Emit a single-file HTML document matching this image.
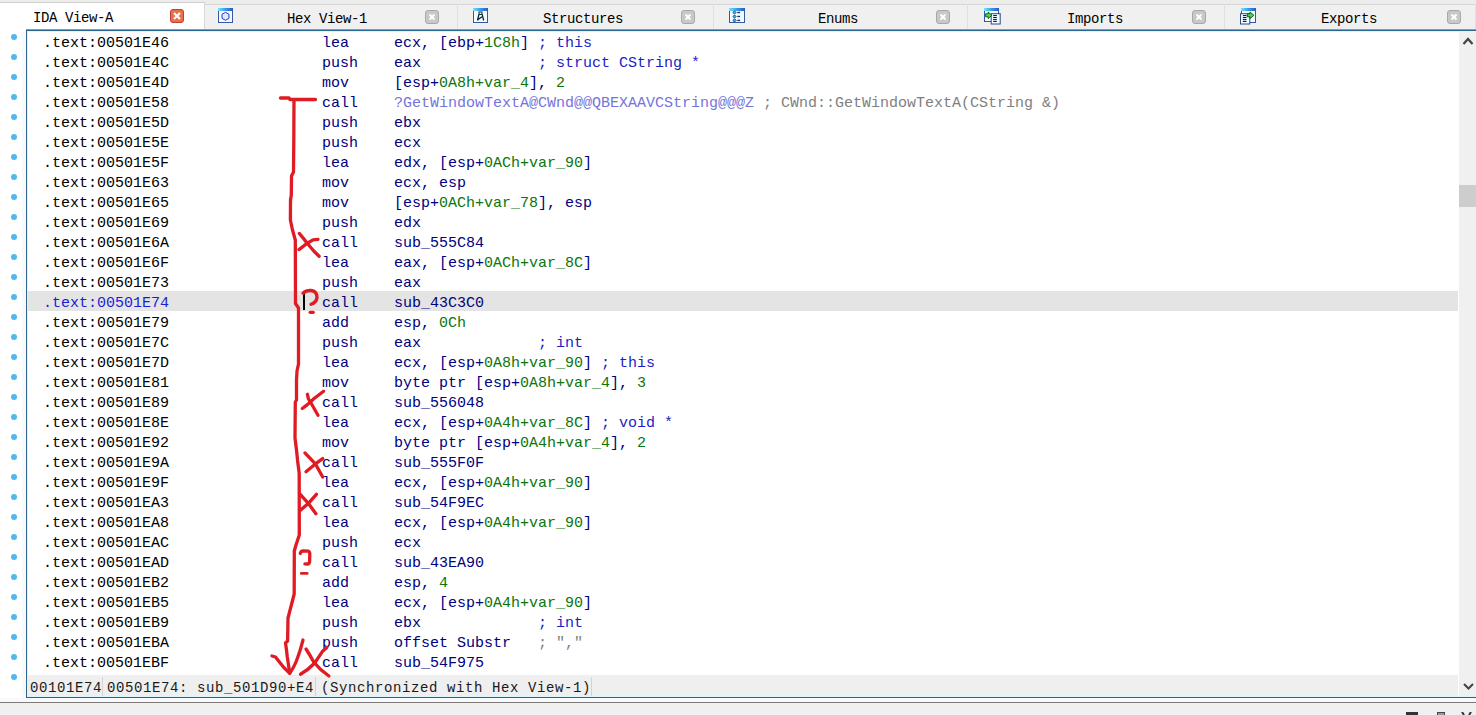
<!DOCTYPE html>
<html><head><meta charset="utf-8"><style>
*{margin:0;padding:0;box-sizing:border-box}
html,body{width:1476px;height:715px;overflow:hidden;background:#fff;position:relative;font-family:"Liberation Mono",monospace}
#strip{position:absolute;left:0;top:0;width:1476px;height:30px;background:#ececec}
.tab{position:absolute;top:4px;height:26px;background:#f0f0f0;border-top:1px solid #d6d6d6;border-right:1px solid #e0e0e0}
.tab.act{top:2px;height:28px;background:#fff;border-top:1px solid #d0d0d0;border-right:1px solid #d8d8d8}
.tl{position:absolute;top:11px;font-size:14px;line-height:16px;letter-spacing:-0.4px;color:#000;white-space:pre}
.cb{position:absolute;top:10px;width:14px;height:14px;border-radius:3px;background:#c8c8c8;border:1px solid #a8a8a8}
.cb svg{position:absolute;left:-1px;top:-1px}
.cb.act{top:9px;background:#e8704a;border:1px solid #c0402a}
.ic{position:absolute;top:8px}
#tabline{position:absolute;left:26px;top:29px;width:1450px;height:3px;background:linear-gradient(#8a9cae 0,#8a9cae 1px,#2a6690 1px,#2a6690 2px,#d2fbff 2px)}
#panel{position:absolute;left:26px;top:30px;width:1450px;height:668px;border-left:1px solid #2a6690;border-bottom:1px solid #2a6690}
#pcy{position:absolute;left:27px;top:32px;width:1px;height:664px;background:#d6f6ff}
#bcy{position:absolute;left:27px;top:696px;width:1449px;height:1px;background:#d6f6ff}
.dot{position:absolute;left:11px;width:6px;height:6px;border-radius:50%;background:#50b8ee}
.r{position:absolute;left:43px;height:20px;line-height:20px;font-size:15px;white-space:pre;padding-top:3px}
.r span{white-space:pre}
.a{color:#000}
.ah{color:#1c1cd4}
.m{position:absolute;left:279px;top:3px;color:#000080}
.o{position:absolute;left:351px;top:3px}
.n{color:#000080} .g{color:#0b760b} .c{color:#1c1cc8} .gr{color:#7f7f7f} .p{color:#7474dc}
#hl{position:absolute;left:28px;top:291px;width:1430px;height:20px;background:#e4e4e4}
#sb{position:absolute;left:1459px;top:31px;width:17px;height:666px;background:#f0f0f0}
#thumb{position:absolute;left:1459px;top:185px;width:17px;height:22px;background:#cdcdcd}
#status{position:absolute;left:27px;top:675px;width:1431px;height:22px;background:#efefef}
.st{position:absolute;top:675px;height:22px;line-height:22px;font-size:14px;letter-spacing:0.6px;color:#1a1a1a;white-space:pre;padding-top:2px}
.sep{position:absolute;top:677px;width:1px;height:19px;background:#d4d4d4}
#bottom{position:absolute;left:0;top:698px;width:1476px;height:17px;background:#f0f0f0}
#bline{position:absolute;left:0;top:702px;width:1476px;height:1px;background:#7a7a7a}
#bwhite{position:absolute;left:0;top:698px;width:1476px;height:4px;background:#fbf8fb}
.ann{position:absolute;left:0;top:0}
#cursor{position:absolute;left:303px;top:294px;width:2px;height:16px;background:#000}
</style></head><body>
<div id="strip"></div>
<div class="tab act" style="left:0px;width:205px"></div>
<div class="tl" style="left:33px;top:10px">IDA View-A</div>
<div class="cb act" style="left:170px"><svg width="14" height="14" viewBox="0 0 14 14"><path d="M4,4 L10,10 M10,4 L4,10" stroke="#fff" stroke-width="2.2"/></svg></div>
<div class="tab" style="left:205px;width:253px"></div>
<div class="tl" style="left:287px;top:11px">Hex View-1</div>
<div class="cb" style="left:425px"><svg width="14" height="14" viewBox="0 0 14 14"><path d="M4.5,4.5 L9.5,9.5 M9.5,4.5 L4.5,9.5" stroke="#fff" stroke-width="2"/></svg></div>
<svg class="ic" style="left:218px" width="17" height="17" viewBox="0 0 17 17"><defs><linearGradient id="tbhex" x1="0" x2="1"><stop offset="0" stop-color="#6fe6ff"/><stop offset="0.5" stop-color="#3a9ae8"/><stop offset="1" stop-color="#2a58c8"/></linearGradient></defs><rect x="0.5" y="0.5" width="14" height="14" fill="#f2fdff" stroke="#3558a0"/><rect x="0" y="0" width="15" height="3" fill="url(#tbhex)"/><polygon points="7.5,4.3 11,6.3 11,10.3 7.5,12.3 4,10.3 4,6.3" fill="#dfe8ff" stroke="#3030c8" stroke-width="1"/></svg>
<div class="tab" style="left:458px;width:256px"></div>
<div class="tl" style="left:543px;top:11px">Structures</div>
<div class="cb" style="left:681px"><svg width="14" height="14" viewBox="0 0 14 14"><path d="M4.5,4.5 L9.5,9.5 M9.5,4.5 L4.5,9.5" stroke="#fff" stroke-width="2"/></svg></div>
<svg class="ic" style="left:473px" width="17" height="17" viewBox="0 0 17 17"><defs><linearGradient id="tbstruct" x1="0" x2="1"><stop offset="0" stop-color="#6fe6ff"/><stop offset="0.5" stop-color="#3a9ae8"/><stop offset="1" stop-color="#2a58c8"/></linearGradient></defs><rect x="0.5" y="0.5" width="14" height="14" fill="#f2fdff" stroke="#3558a0"/><rect x="0" y="0" width="15" height="3" fill="url(#tbstruct)"/><rect x="6" y="4" width="3" height="2.5" fill="#dff" stroke="#102838" stroke-width="1"/><path d="M5.9,6.4 L4.5,12.5 M9.2,6.4 L10.7,12.5 M4.8,11.6 L9,8.8" fill="none" stroke="#102838" stroke-width="1.3"/></svg>
<div class="tab" style="left:714px;width:254px"></div>
<div class="tl" style="left:818px;top:11px">Enums</div>
<div class="cb" style="left:936px"><svg width="14" height="14" viewBox="0 0 14 14"><path d="M4.5,4.5 L9.5,9.5 M9.5,4.5 L4.5,9.5" stroke="#fff" stroke-width="2"/></svg></div>
<svg class="ic" style="left:729px" width="17" height="17" viewBox="0 0 17 17"><defs><linearGradient id="tbenum" x1="0" x2="1"><stop offset="0" stop-color="#6fe6ff"/><stop offset="0.5" stop-color="#3a9ae8"/><stop offset="1" stop-color="#2a58c8"/></linearGradient></defs><rect x="0.5" y="0.5" width="15" height="14" fill="#f2fdff" stroke="#3558a0"/><rect x="0" y="0" width="16" height="3" fill="url(#tbenum)"/><path d="M3.9,4.5 l1.6,-1.6 l1.6,1.6 l-1.6,1.6z" fill="#48b4ee" stroke="#103a78" stroke-width="0.9"/><rect x="8.3" y="3.8" width="2.8" height="1.4" fill="#203868"/><path d="M3.9,8.5 l1.6,-1.6 l1.6,1.6 l-1.6,1.6z" fill="#48b4ee" stroke="#103a78" stroke-width="0.9"/><rect x="8.3" y="7.8" width="2.8" height="1.4" fill="#203868"/><path d="M3.9,12.4 l1.6,-1.6 l1.6,1.6 l-1.6,1.6z" fill="#48b4ee" stroke="#103a78" stroke-width="0.9"/><rect x="8.3" y="11.700000000000001" width="2.8" height="1.4" fill="#203868"/></svg>
<div class="tab" style="left:968px;width:257px"></div>
<div class="tl" style="left:1067px;top:11px">Imports</div>
<div class="cb" style="left:1192px"><svg width="14" height="14" viewBox="0 0 14 14"><path d="M4.5,4.5 L9.5,9.5 M9.5,4.5 L4.5,9.5" stroke="#fff" stroke-width="2"/></svg></div>
<svg class="ic" style="left:984px" width="17" height="17" viewBox="0 0 17 17"><defs><linearGradient id="tbimp" x1="0" x2="1"><stop offset="0" stop-color="#6fe6ff"/><stop offset="0.5" stop-color="#3a9ae8"/><stop offset="1" stop-color="#2a58c8"/></linearGradient></defs><rect x="0.5" y="0.5" width="14" height="13" fill="#f2fdff" stroke="#3558a0"/><rect x="0" y="0" width="15" height="3" fill="url(#tbimp)"/><rect x="7.2" y="5.7" width="9" height="10.3" fill="#f2fdff" stroke="#2e4a80"/><rect x="9.2" y="7" width="3.6" height="1.1" fill="#141478"/><rect x="9.2" y="9" width="3.6" height="1.1" fill="#141478"/><rect x="9.2" y="11" width="3.6" height="1.1" fill="#141478"/><rect x="9.2" y="12.9" width="3.6" height="1.1" fill="#141478"/><path d="M1.6,5.8 L4.2,5.8 L4.2,4 L7.9,7.3 L4.2,10.6 L4.2,8.8 L1.6,8.8z" fill="#4ad84a" stroke="#0a5020" stroke-width="0.9"/></svg>
<div class="tab" style="left:1225px;width:251px"></div>
<div class="tl" style="left:1321px;top:11px">Exports</div>
<div class="cb" style="left:1447px"><svg width="14" height="14" viewBox="0 0 14 14"><path d="M4.5,4.5 L9.5,9.5 M9.5,4.5 L4.5,9.5" stroke="#fff" stroke-width="2"/></svg></div>
<svg class="ic" style="left:1240px" width="17" height="17" viewBox="0 0 17 17"><defs><linearGradient id="tbexp" x1="0" x2="1"><stop offset="0" stop-color="#6fe6ff"/><stop offset="0.5" stop-color="#3a9ae8"/><stop offset="1" stop-color="#2a58c8"/></linearGradient></defs><rect x="1.5" y="0.5" width="14" height="14" fill="#f2fdff" stroke="#3558a0"/><rect x="1" y="0" width="15" height="3" fill="url(#tbexp)"/><rect x="0.5" y="5.7" width="9.3" height="10.3" fill="#f2fdff" stroke="#2e4a80"/><rect x="2.9" y="7" width="3.6" height="1.1" fill="#141478"/><rect x="2.9" y="9" width="3.6" height="1.1" fill="#141478"/><rect x="2.9" y="11" width="3.6" height="1.1" fill="#141478"/><rect x="2.9" y="12.9" width="3.6" height="1.1" fill="#141478"/><path d="M7.3,5.8 L10,5.8 L10,4 L13.9,7.3 L10,10.6 L10,8.8 L7.3,8.8z" fill="#4ad84a" stroke="#0a5020" stroke-width="0.9"/></svg>
<div id="tabline"></div>
<div id="lstrip" style="position:absolute;left:22px;top:31px;width:4px;height:667px;background:#f9f9f9"></div><div id="panel"></div><div id="pcy"></div>
<div class="dot" style="top:34px"></div>
<div class="dot" style="top:54px"></div>
<div class="dot" style="top:74px"></div>
<div class="dot" style="top:94px"></div>
<div class="dot" style="top:114px"></div>
<div class="dot" style="top:134px"></div>
<div class="dot" style="top:154px"></div>
<div class="dot" style="top:174px"></div>
<div class="dot" style="top:194px"></div>
<div class="dot" style="top:214px"></div>
<div class="dot" style="top:234px"></div>
<div class="dot" style="top:254px"></div>
<div class="dot" style="top:274px"></div>
<div class="dot" style="top:294px"></div>
<div class="dot" style="top:314px"></div>
<div class="dot" style="top:334px"></div>
<div class="dot" style="top:354px"></div>
<div class="dot" style="top:374px"></div>
<div class="dot" style="top:394px"></div>
<div class="dot" style="top:414px"></div>
<div class="dot" style="top:434px"></div>
<div class="dot" style="top:454px"></div>
<div class="dot" style="top:474px"></div>
<div class="dot" style="top:494px"></div>
<div class="dot" style="top:514px"></div>
<div class="dot" style="top:534px"></div>
<div class="dot" style="top:554px"></div>
<div class="dot" style="top:574px"></div>
<div class="dot" style="top:594px"></div>
<div class="dot" style="top:614px"></div>
<div class="dot" style="top:634px"></div>
<div class="dot" style="top:654px"></div>
<div class="dot" style="top:674px"></div>
<div id="hl"></div>
<div class="r" style="top:31px"><span class="a">.text:00501E46</span><span class="m">lea</span><span class="o"><span class="n">ecx, [ebp+</span><span class="g">1C8h</span><span class="n">]</span><span class="c"> ; this</span></span></div>
<div class="r" style="top:51px"><span class="a">.text:00501E4C</span><span class="m">push</span><span class="o"><span class="n">eax</span><span class="c">             ; struct CString *</span></span></div>
<div class="r" style="top:71px"><span class="a">.text:00501E4D</span><span class="m">mov</span><span class="o"><span class="n">[esp+</span><span class="g">0A8h+var_4</span><span class="n">], </span><span class="g">2</span></span></div>
<div class="r" style="top:91px"><span class="a">.text:00501E58</span><span class="m">call</span><span class="o"><span class="p">?GetWindowTextA@CWnd@@QBEXAAVCString@@@Z</span><span class="gr"> ; CWnd::GetWindowTextA(CString &amp;)</span></span></div>
<div class="r" style="top:111px"><span class="a">.text:00501E5D</span><span class="m">push</span><span class="o"><span class="n">ebx</span></span></div>
<div class="r" style="top:131px"><span class="a">.text:00501E5E</span><span class="m">push</span><span class="o"><span class="n">ecx</span></span></div>
<div class="r" style="top:151px"><span class="a">.text:00501E5F</span><span class="m">lea</span><span class="o"><span class="n">edx, [esp+</span><span class="g">0ACh+var_90</span><span class="n">]</span></span></div>
<div class="r" style="top:171px"><span class="a">.text:00501E63</span><span class="m">mov</span><span class="o"><span class="n">ecx, esp</span></span></div>
<div class="r" style="top:191px"><span class="a">.text:00501E65</span><span class="m">mov</span><span class="o"><span class="n">[esp+</span><span class="g">0ACh+var_78</span><span class="n">], esp</span></span></div>
<div class="r" style="top:211px"><span class="a">.text:00501E69</span><span class="m">push</span><span class="o"><span class="n">edx</span></span></div>
<div class="r" style="top:231px"><span class="a">.text:00501E6A</span><span class="m">call</span><span class="o"><span class="n">sub_555C84</span></span></div>
<div class="r" style="top:251px"><span class="a">.text:00501E6F</span><span class="m">lea</span><span class="o"><span class="n">eax, [esp+</span><span class="g">0ACh+var_8C</span><span class="n">]</span></span></div>
<div class="r" style="top:271px"><span class="a">.text:00501E73</span><span class="m">push</span><span class="o"><span class="n">eax</span></span></div>
<div class="r" style="top:291px"><span class="ah">.text:00501E74</span><span class="m">call</span><span class="o"><span class="n">sub_43C3C0</span></span></div>
<div class="r" style="top:311px"><span class="a">.text:00501E79</span><span class="m">add</span><span class="o"><span class="n">esp, </span><span class="g">0Ch</span></span></div>
<div class="r" style="top:331px"><span class="a">.text:00501E7C</span><span class="m">push</span><span class="o"><span class="n">eax</span><span class="c">             ; int</span></span></div>
<div class="r" style="top:351px"><span class="a">.text:00501E7D</span><span class="m">lea</span><span class="o"><span class="n">ecx, [esp+</span><span class="g">0A8h+var_90</span><span class="n">]</span><span class="c"> ; this</span></span></div>
<div class="r" style="top:371px"><span class="a">.text:00501E81</span><span class="m">mov</span><span class="o"><span class="n">byte ptr [esp+</span><span class="g">0A8h+var_4</span><span class="n">], </span><span class="g">3</span></span></div>
<div class="r" style="top:391px"><span class="a">.text:00501E89</span><span class="m">call</span><span class="o"><span class="n">sub_556048</span></span></div>
<div class="r" style="top:411px"><span class="a">.text:00501E8E</span><span class="m">lea</span><span class="o"><span class="n">ecx, [esp+</span><span class="g">0A4h+var_8C</span><span class="n">]</span><span class="c"> ; void *</span></span></div>
<div class="r" style="top:431px"><span class="a">.text:00501E92</span><span class="m">mov</span><span class="o"><span class="n">byte ptr [esp+</span><span class="g">0A4h+var_4</span><span class="n">], </span><span class="g">2</span></span></div>
<div class="r" style="top:451px"><span class="a">.text:00501E9A</span><span class="m">call</span><span class="o"><span class="n">sub_555F0F</span></span></div>
<div class="r" style="top:471px"><span class="a">.text:00501E9F</span><span class="m">lea</span><span class="o"><span class="n">ecx, [esp+</span><span class="g">0A4h+var_90</span><span class="n">]</span></span></div>
<div class="r" style="top:491px"><span class="a">.text:00501EA3</span><span class="m">call</span><span class="o"><span class="n">sub_54F9EC</span></span></div>
<div class="r" style="top:511px"><span class="a">.text:00501EA8</span><span class="m">lea</span><span class="o"><span class="n">ecx, [esp+</span><span class="g">0A4h+var_90</span><span class="n">]</span></span></div>
<div class="r" style="top:531px"><span class="a">.text:00501EAC</span><span class="m">push</span><span class="o"><span class="n">ecx</span></span></div>
<div class="r" style="top:551px"><span class="a">.text:00501EAD</span><span class="m">call</span><span class="o"><span class="n">sub_43EA90</span></span></div>
<div class="r" style="top:571px"><span class="a">.text:00501EB2</span><span class="m">add</span><span class="o"><span class="n">esp, </span><span class="g">4</span></span></div>
<div class="r" style="top:591px"><span class="a">.text:00501EB5</span><span class="m">lea</span><span class="o"><span class="n">ecx, [esp+</span><span class="g">0A4h+var_90</span><span class="n">]</span></span></div>
<div class="r" style="top:611px"><span class="a">.text:00501EB9</span><span class="m">push</span><span class="o"><span class="n">ebx</span><span class="c">             ; int</span></span></div>
<div class="r" style="top:631px"><span class="a">.text:00501EBA</span><span class="m">push</span><span class="o"><span class="n">offset Substr</span><span class="gr">   ; ","</span></span></div>
<div class="r" style="top:651px"><span class="a">.text:00501EBF</span><span class="m">call</span><span class="o"><span class="n">sub_54F975</span></span></div>
<div id="cursor"></div>
<div id="sb"></div>
<svg style="position:absolute;left:1459px;top:33px" width="17" height="17" viewBox="0 0 17 17"><path d="M4.5,11 L9,6 L13.5,11" fill="none" stroke="#444" stroke-width="2.2"/></svg>
<div id="thumb"></div>
<div id="status"></div>
<div class="st" style="left:30px">00101E74</div>
<div class="sep" style="left:102px"></div>
<div class="st" style="left:107px">00501E74: sub_501D90+E4</div>
<div class="sep" style="left:315px"></div>
<div class="st" style="left:321px">(Synchronized with Hex View-1)</div>
<div class="sep" style="left:591px"></div>
<svg style="position:absolute;left:1460px;top:678px" width="17" height="17" viewBox="0 0 17 17"><path d="M4,6 L8.5,10.5 L13,6" fill="none" stroke="#444" stroke-width="2"/></svg>
<div id="bcy"></div><div id="bottom"></div>
<div id="bwhite"></div>
<div id="bline"></div>
<div style="position:absolute;left:1406px;top:712px;width:12px;height:3px;background:#333"></div>
<div style="position:absolute;left:1437px;top:712px;width:8px;height:3px;border:1px solid #444;border-bottom:none;background:#999"></div>
<svg style="position:absolute;left:1461px;top:712px" width="11" height="3" viewBox="0 0 11 3"><path d="M1,0 L3,3 M10,0 L8,3" stroke="#333" stroke-width="2"/></svg>
<svg class="ann" width="1476" height="715" viewBox="0 0 1476 715">
<g fill="none" stroke="#e01b24" stroke-width="3.3" stroke-linecap="round" stroke-linejoin="round">
<path d="M280.5,98 L289,98 L290,99.5 L315.5,99.5"/>
<path d="M294,100 L293.8,140 L293.5,172 L291.5,176 L291.3,195 L290.5,200 L290.4,220 L292.5,230 L295.3,240 L295.4,270 L295.5,303.5 L298.5,308 L298.5,364 L297,371 L296.5,380 L296.5,400 L295.3,402 L295,438 L296.5,450 L297.6,460.7 L299.2,473.3 L299.3,535 L296,545 L294.3,551 L294.2,594 L288,618 L287.6,641 L285.5,643 L286.5,650 L287.3,657 L289.7,673"/>
<path d="M272,656 L275.5,657 L283.4,667 L289.7,673.3 Q294,667 296,662 Q299,654 300.5,649 L303,640"/>
<path d="M299.3,233.4 Q304,239 307.4,243.5 L314,251.3 L319.1,256.3"/>
<path d="M318,239.3 L313,239.8 L306.8,243.5 L299,249.6"/>
<path d="M303,293.2 Q306,290.3 311,290.5 Q317,291 317,297.5 Q316.5,302.5 311,304.3"/>
<path d="M310.2,312.3 L313.2,312.3"/>
<path d="M307.4,394.3 L308.5,399 L311.3,403.5 L318,415.2"/>
<path d="M323.6,391.2 L314.1,398.5 L307.4,404.6 L302.3,408.5"/>
<path d="M304.9,452.9 L315.4,463.9 L322.7,477"/>
<path d="M322.7,458.6 L315.4,463.9 L306,471.7"/>
<path d="M300.2,494.3 L308.6,503.7 L315.9,513.7"/>
<path d="M316.4,494.3 L309.1,502.7 L300.7,510"/>
<path d="M300.3,553.5 Q300.8,551 303,551 L308.5,551.2 Q310,552 309.8,555 L309.6,562 Q309,564 307.5,564 L304.9,563.8"/>
<path d="M301.3,573.4 L307.2,573.4" stroke-width="2.7"/>
<path d="M306,649 Q310,655 313.7,662 Q320,670 328.9,676"/>
<path d="M326.9,647.4 L322.5,651.3 Q318,658 314.7,663 Q308,670 300.5,674.3"/>
</g>
</svg>
</body></html>
